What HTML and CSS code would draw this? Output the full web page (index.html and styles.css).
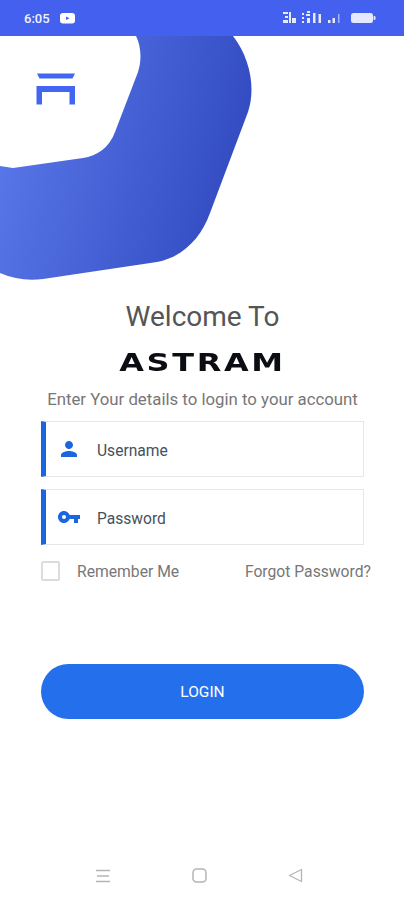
FILE: index.html
```html
<!DOCTYPE html>
<html lang="en">
<head>
  <meta charset="UTF-8" />
  <meta name="viewport" content="width=device-width, initial-scale=1.0" />
  <title>Astram Login</title>
  <link rel="stylesheet" href="styles.css">
</head>
<body>
  <div class="status-bar">
    <span class="time">6:05</span>
    <svg class="yt-icon" width="15" height="11" viewBox="0 0 15 11">
      <rect width="15" height="10.5" rx="3" fill="#fff"/>
      <path d="M6 3.5 L9.5 5.3 L6 7 Z" fill="#4361ee"/>
    </svg>
    <svg class="status-icons" width="94" height="14" viewBox="0 0 94 14">
      <g fill="#e6eafd">
        <!-- volte -->
        <rect x="0" y="1" width="5" height="2"/><rect x="2" y="5" width="3" height="2"/><rect x="0" y="9" width="5" height="3"/>
        <rect x="6" y="1" width="2" height="11"/><rect x="9" y="7" width="4" height="5"/>
        <!-- signal 1 -->
        <rect x="19" y="2" width="2" height="2"/><rect x="19" y="6" width="2" height="2"/>
        <rect x="24" y="0" width="3" height="2"/><rect x="23" y="3" width="4" height="2"/>
        <rect x="24" y="7" width="3" height="5"/><rect x="19" y="10" width="2" height="2"/>
        <rect x="30" y="2" width="2.500" height="10"/><rect x="35.500" y="3" width="2.500" height="9"/>
        <!-- signal 2 -->
        <rect x="45" y="9" width="2.500" height="3"/><rect x="49.500" y="7" width="2.500" height="5"/><rect x="55" y="3" width="1.500" height="9" opacity=".6"/>
      </g>
      <!-- battery -->
      <rect x="68" y="2" width="22" height="10" rx="2.500" fill="#e4e8fd"/>
      <rect x="90.500" y="5" width="2" height="4" rx="1" fill="#e4e8fd"/>
    </svg>
  </div>

  <svg class="hero" width="404" height="250" viewBox="0 36 404 250">
    <defs>
      <linearGradient id="heroFill" x1="0" y1="0.5" x2="1" y2="0.75">
        <stop offset="0" stop-color="#5876e8"/>
        <stop offset="1" stop-color="#2f47bd"/>
      </linearGradient>
    </defs>
    <path fill="url(#heroFill)" d="M136 36 C141 46 142 60 138 72 L115 132 C109 148 97 156 83 158 L13 168 L0 166 L0 273 C14 279 28 281 43 279 L157 262 C183 257 201 238 210 213 L248 112 C256 88 250 58 233 36 Z"/>
    <!-- logo mark -->
    <g fill="#4366f2">
      <path d="M37 73.500 H75 L72.500 78.500 H39.500 Z"/>
      <path d="M36.500 86 H75 V104.500 H69.500 V92 H42 V104.500 H36.500 Z"/>
    </g>
  </svg>

  <main class="login">
    <h1 class="welcome">Welcome To</h1>
    <div class="brand">ASTRAM</div>
    <p class="subtitle">Enter Your details to login to your account</p>

    <div class="field">
      <svg class="field-icon" width="24" height="24" viewBox="0 0 24 24">
        <path fill="#1a66e0" d="M12 12c2.210 0 4-1.790 4-4s-1.790-4-4-4-4 1.790-4 4 1.790 4 4 4zm0 2c-2.670 0-8 1.340-8 4v2h16v-2c0-2.660-5.330-4-8-4z"/>
      </svg>
      <input class="field-input" type="text" placeholder="Username">
    </div>
    <div class="field">
      <svg class="field-icon" width="24" height="24" viewBox="0 0 24 24">
        <path fill="#1a66e0" d="M12.650 10C11.830 7.670 9.610 6 7 6c-3.310 0-6 2.690-6 6s2.690 6 6 6c2.610 0 4.830-1.670 5.650-4H17v4h4v-4h2v-4H12.650zM7 14c-1.100 0-2-.9-2-2s.9-2 2-2 2 .9 2 2-.9 2-2 2z"/>
      </svg>
      <input class="field-input" type="password" placeholder="Password">
    </div>

    <div class="options">
      <label class="remember">
        <input class="check" type="checkbox">
        <span>Remember Me</span>
      </label>
      <a class="forgot">Forgot Password?</a>
    </div>

    <button class="login-btn">LOGIN</button>
  </main>

  <div class="nav-bar">
    <svg width="14" height="14" viewBox="0 0 14 14">
      <path d="M0 1.500 H14 M1 7 H13 M0 12.500 H14" stroke="#b5b5b5" stroke-width="1.500" fill="none"/>
    </svg>
    <svg width="15" height="15" viewBox="0 0 15 15">
      <rect x="1" y="1" width="13" height="13" rx="3.500" stroke="#b5b5b5" stroke-width="1.500" fill="none"/>
    </svg>
    <svg width="15" height="15" viewBox="0 0 15 15">
      <path d="M1.500 7.500 L13.500 1.500 V13.500 Z" stroke="#b5b5b5" stroke-width="1.300" stroke-linejoin="round" fill="none"/>
    </svg>
  </div>
</body>
</html>
```

FILE: styles.css
```css
* {
  box-sizing: border-box;
}
body {
  margin: 0;
  background: #fff;
  font-family: Roboto, Arial, sans-serif;
  height: 900px;
  overflow: hidden;
}
.status-bar {
  display: flex;
  align-items: center;
  height: 36px;
  padding: 0 27px 0 24px;
  background: #4361ee;
  color: #f1f3fe;
}
.time {
  font-size: 13px;
  font-weight: 500;
}
.yt-icon {
  margin-left: 10px;
}
.status-icons {
  margin-left: auto;
  filter: blur(0.5px);
}
.hero {
  display: block;
}
.login {
  display: flex;
  flex-direction: column;
  padding: 0 40px 0 41px;
}
.welcome {
  margin: 14px 0 0;
  font-size: 28px;
  font-weight: 400;
  line-height: 34px;
  text-align: center;
  color: #555;
}
.brand {
  margin-top: 15px;
  font-family: "DejaVu Sans", Arial, sans-serif;
  font-size: 24px;
  font-weight: 700;
  line-height: 28px;
  letter-spacing: 2px;
  text-align: center;
  color: #0b0d12;
  transform: scaleX(1.33);
}
.subtitle {
  margin: 11px -10px 11px;
  font-size: 16.8px;
  line-height: 22px;
  text-align: center;
  white-space: nowrap;
  color: #777;
}
.field {
  display: flex;
  align-items: center;
  height: 56px;
  margin-bottom: 12px;
  padding-left: 11px;
  background: #fff;
  border: 1px solid #e4e6e8;
  border-left: 5px solid #1a66e0;
}
.field-icon {
  flex: none;
}
.field-input {
  flex: 1;
  min-width: 0;
  margin-left: 16px;
  padding: 3px 0 0;
  border: 0;
  outline: 0;
  background: transparent;
  font-family: inherit;
  font-size: 15.6px;
}
.field-input::placeholder {
  color: #44525c;
  opacity: 1;
}
.options {
  display: flex;
  align-items: center;
  justify-content: space-between;
  height: 30px;
  margin: -1px -7px 0 0;
  font-size: 15.7px;
  color: #777;
}
.remember {
  display: flex;
  align-items: center;
  gap: 17px;
}
.check {
  appearance: none;
  width: 19px;
  height: 20px;
  margin: 0;
  background: #fff;
  border: 2px solid #dcdcdc;
  border-radius: 2px;
}
.login-btn {
  height: 55px;
  margin-top: 78px;
  border: 0;
  border-radius: 28px;
  background: #2470ec;
  color: #fff;
  font-family: inherit;
  font-size: 15.5px;
}
.nav-bar {
  display: flex;
  align-items: center;
  justify-content: space-between;
  width: 207px;
  margin: 149px 0 0 96px;
}
```
